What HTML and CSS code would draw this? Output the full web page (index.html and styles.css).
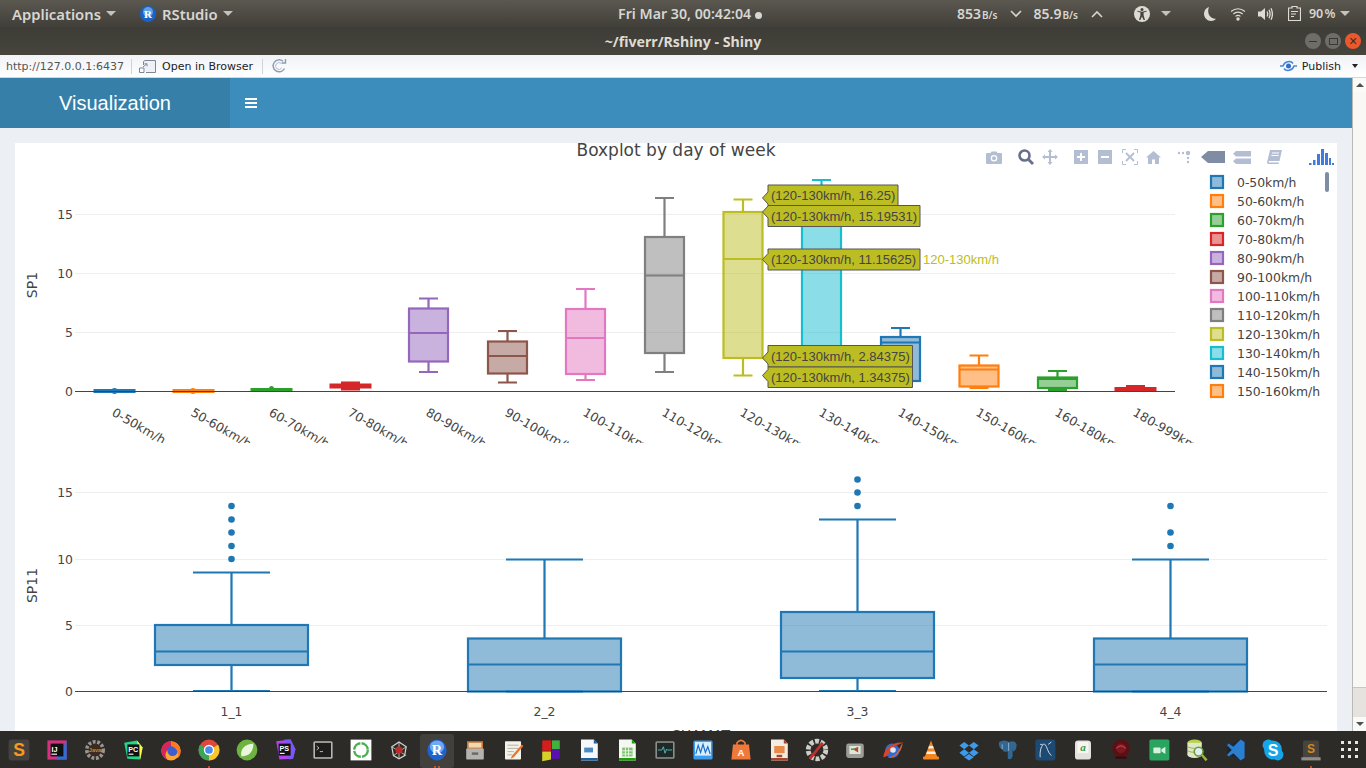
FILE: index.html
```html
<!DOCTYPE html>
<html lang="en">
<head>
    <meta charset="UTF-8">
    <meta name="viewport" content="width=device-width, initial-scale=1.0">
    <title>Visualization</title>
    <link rel="stylesheet" href="styles.css">
</head>
<body>
<div class="screen">

    <!-- desktop top bar -->
    <div class="topbar">
        <div class="top-left">
            <span class="top-item apps">Applications</span><span class="caret"></span>
            <svg class="r-logo" width="16" height="16" viewBox="0 0 16 16"><circle cx="8" cy="8" r="8" fill="#1a62c4"/><circle cx="8" cy="6" r="5" fill="#5f9fe8"/><text x="8" y="12" class="r-letter">R</text></svg>
            <span class="top-item rstudio">RStudio</span><span class="caret"></span>
        </div>
        <div class="top-date">Fri Mar 30, 00:42:04 <span class="date-dot"></span></div>
        <div class="top-right">
            <span class="top-item">853<small>B/s</small></span>
            <svg class="chev chev-down" width="12" height="8" viewBox="0 0 12 8"><path d="M1 1l5 5 5-5" fill="none" stroke="#d8d5cf" stroke-width="1.6"/></svg>
            <span class="top-item net-up">85.9<small>B/s</small></span>
            <svg class="chev chev-up" width="12" height="8" viewBox="0 0 12 8"><path d="M1 7l5-5 5 5" fill="none" stroke="#d8d5cf" stroke-width="1.6"/></svg>
            <svg class="ic-access" width="16" height="16" viewBox="0 0 16 16"><circle cx="8" cy="8" r="8" fill="#dedbd5"/><circle cx="8" cy="3.6" r="1.5" fill="#45433d"/><path d="M3.2 5.6L6.4 6.6V9.2L5 14H6.4L8 10.4 9.6 14H11L9.6 9.2V6.6L12.8 5.6 12.5 4.8 8 5.8 3.5 4.8z" fill="#45433d"/></svg>
            <span class="caret caret-access"></span>
            <svg class="ic-moon" width="12" height="14" viewBox="0 0 12 14"><path d="M5 0C2 1 0 3.600 0 6.800 0 10.800 3.200 14 7 14 9 14 10.800 13.200 12 11.800 8 12 5 9 4.400 6 4 4 4.200 2 5 0z" fill="#dedbd5"/></svg>
            <svg class="ic-wifi" width="14" height="14" viewBox="0 0 14 14"><path d="M0 4.500C4 .8 10 .8 14 4.500M2.300 7C5 4.600 9 4.600 11.700 7M4.500 9.400C6 8.200 8 8.200 9.500 9.400" fill="none" stroke="#dedbd5" stroke-width="1.200"/><circle cx="7" cy="12" r="1.700" fill="#dedbd5"/></svg>
            <svg class="ic-vol" width="15" height="14" viewBox="0 0 15 14"><path d="M0 4.500H3L7 1V13L3 9.500H0z" fill="#dedbd5"/><path d="M9 4.500Q10.500 7 9 9.500M11 2.800Q13.200 7 11 11.200M13 1.200Q15.800 7 13 12.800" fill="none" stroke="#dedbd5" stroke-width="1.300"/></svg>
            <svg class="ic-batt" width="13" height="15" viewBox="0 0 13 15"><path d="M4 .5H9V2H12.500V14.500H.5V2H4z" fill="none" stroke="#dedbd5" stroke-width="1.200"/><path d="M3 5.500H10M3 8H8M3 10.500H6" stroke="#dedbd5" stroke-width="1.100"/></svg>
            <span class="top-item pct">90 %</span><span class="caret"></span>
        </div>
    </div>

    <!-- window title bar -->
    <div class="titlebar">
        <span class="win-title">~/fiverr/Rshiny - Shiny</span>
        <div class="win-buttons">
            <span class="win-btn"><span class="win-min"></span></span>
            <span class="win-btn"><span class="win-max"></span></span>
            <span class="win-btn win-close">&#215;</span>
        </div>
    </div>

    <!-- rstudio viewer toolbar -->
    <div class="toolbar">
        <span class="url">http://127.0.0.1:6437</span>
        <span class="tool-sep"></span>
        <svg class="ic-open" width="18" height="13" viewBox="0 0 18 13"><path d="M4.500 5V1.500L6 .5H16.500V12.500H7" fill="#eef1f6" stroke="#7d8798"/><path d="M.5 12.500V8H5V12.500zM4 7L7.500 4M5.500 3.800H8V6.300" fill="none" stroke="#7d8798"/></svg>
        <span class="open-text">Open in Browser</span>
        <span class="tool-sep sep-two"></span>
        <svg class="ic-refresh" width="16" height="16" viewBox="0 0 16 16"><path d="M13.500 10.500A6 6 0 1 1 12 3.200M14.500 1V5H10.500" fill="none" stroke="#8f9bb2" stroke-width="1.400"/><path d="M10.800 10A3.400 3.400 0 1 1 10.200 5.400" fill="none" stroke="#b4bccb"/></svg>
        <svg class="ic-publish" width="17" height="12" viewBox="0 0 17 12"><circle cx="8.500" cy="6" r="2.500" fill="#2f6fd0"/><path d="M0 6H3C4.500 1 11 .5 13 3.500M17 6H14C12.500 11 6 11.500 4 8.500" fill="none" stroke="#4a86d8" stroke-width="1.500"/></svg>
        <span class="publish-text">Publish</span>
        <span class="publish-caret"></span>
    </div>

    <div class="viewer">
        <div class="page">
            <header class="app-header">
                <div class="logo">Visualization</div>
                <div class="hamburger"><span></span><span></span><span></span></div>
            </header>

            <div class="content">
                <div class="card">
                    <div class="plot">
                        <div class="modebar">
                            <svg class="mb mb-camera" width="16" height="13" viewBox="0 0 16 13"><path fill-rule="evenodd" d="M1 2H4.500L5.500 .5H10.500L11.500 2H15Q16 2 16 3V12Q16 13 15 13H1Q0 13 0 12V3Q0 2 1 2zM8 4A3.300 3.300 0 1 0 8 10.600 3.300 3.300 0 1 0 8 4z"/><circle cx="8" cy="7.300" r="2"/></svg>
                            <svg class="mb mb-zoom" width="16" height="16" viewBox="0 0 16 16"><circle cx="6.500" cy="6.500" r="5" fill="none" stroke-width="2.600"/><path d="M10.500 10.500L15 15" fill="none" stroke-width="2.800"/></svg>
                            <svg class="mb mb-pan" width="16" height="16" viewBox="0 0 16 16"><path d="M8 0L10.500 3H9V7H13V5.500L16 8 13 10.500V9H9V13H10.500L8 16 5.500 13H7V9H3V10.500L0 8 3 5.500V7H7V3H5.500z"/></svg>
                            <svg class="mb mb-plus" width="14" height="14" viewBox="0 0 14 14"><path fill-rule="evenodd" d="M0 0H14V14H0zM6 3V6H3V8H6V11H8V8H11V6H8V3z"/></svg>
                            <svg class="mb mb-minus" width="14" height="14" viewBox="0 0 14 14"><path fill-rule="evenodd" d="M0 0H14V14H0zM3 6V8H11V6z"/></svg>
                            <svg class="mb mb-auto" width="16" height="16" viewBox="0 0 16 16"><path d="M.5 4V.5H4M12 .5H15.500V4M15.500 12V15.500H12M4 15.500H.5V12" fill="none" stroke-width="1"/><path d="M4 4L12 12M12 4L4 12" fill="none" stroke-width="1.800"/></svg>
                            <svg class="mb mb-home" width="15" height="13" viewBox="0 0 15 13"><path d="M7.500 0L15 6.500H13V13H9V8.500H6V13H2V6.500H0z"/></svg>
                            <svg class="mb mb-spike" width="15" height="13" viewBox="0 0 15 13"><circle cx="2" cy="2" r="1.200"/><circle cx="6" cy="2" r="1.200"/><circle cx="11" cy="2" r="2.200"/><circle cx="11" cy="7" r="1.200"/><circle cx="11" cy="11" r="1.200"/></svg>
                            <svg class="mb mb-closest" width="24" height="12" viewBox="0 0 24 12"><path d="M0 6L7 0H24V12H7z"/></svg>
                            <svg class="mb mb-compare" width="18" height="13" viewBox="0 0 18 13"><path d="M3 0H18V5.500H3L0 2.700zM3 7.500H18V13H3L0 10.200z"/></svg>
                            <svg class="mb mb-book" width="15" height="14" viewBox="0 0 15 14"><path fill-rule="evenodd" d="M3 0H15L12.500 11H2.500Q1.500 11 1.800 12.500H12L11.700 14H2Q0 14 0 12.500zM5 2.500L4.800 3.500H12L12.200 2.500zM4.500 5L4.300 6H11.500L11.700 5z"/></svg>
                            <svg class="mb mb-logo" width="25" height="16" viewBox="0 0 25 16"><path d="M0 14h2.500v2H0zM4 11h2.500v5H4zM8 5h3v11H8zM12 0h3v16h-3zM16 4h3v12h-3zM20 9h2v7h-2zM23 14h2v2h-2z"/></svg>
                        </div>
                        <svg class="chart" width="1322" height="300" viewBox="15 143 1322 300">
                            <text x="676" y="155.500" class="plot-title">Boxplot by day of week</text>

                            <g class="grid">
                                <path d="M75 214.500H1175M75 273.500H1175M75 332.500H1175"/>
                            </g>
                            <g class="ylabels">
                                <text x="73" y="219">15</text>
                                <text x="73" y="278">10</text>
                                <text x="73" y="337">5</text>
                                <text x="73" y="396">0</text>
                            </g>
                            <text class="ytitle" transform="translate(37 285) rotate(-90)" x="0" y="0">SP1</text>

                            <g class="box box-flat c-blue"><rect x="95" y="390.500" width="39" height="1"/><circle cx="114.500" cy="391" r="3" class="pt"/></g>
                            <g class="box box-flat c-orange"><rect x="174" y="390.500" width="39" height="1"/><circle cx="193" cy="391" r="3" class="pt"/></g>
                            <g class="box box-flat c-green"><rect x="252" y="389.500" width="39" height="1"/><circle cx="271.500" cy="388.500" r="2.500" class="pt"/></g>
                            <g class="box box-flat c-red"><rect x="331" y="385" width="39" height="2"/><path d="M341 383H360M341 389H360"/></g>
                            <g class="box c-purple"><rect x="409" y="308.500" width="39" height="53"/><path d="M409 333H448M428.500 308.500V298.500M419 298.500H438M428.500 361.500V372M419 372H438"/></g>
                            <g class="box c-brown"><rect x="488" y="341.500" width="39" height="32"/><path d="M488 356H527M507.500 341.500V331M498 331H517M507.500 373.500V382.500M498 382.500H517"/></g>
                            <g class="box c-pink"><rect x="566" y="309" width="39" height="65"/><path d="M566 338H605M585.500 309V289M576 289H595M585.500 374V380M576 380H595"/></g>
                            <g class="box c-gray"><rect x="645" y="237" width="39" height="116"/><path d="M645 275.500H684M664.500 237V198M655 198H674M664.500 353V372M655 372H674"/></g>
                            <g class="box c-olive"><rect x="723.500" y="212" width="39" height="146"/><path d="M723.500 259H762.500M743 212V199.500M733.500 199.500H752.500M743 358V375.500M733.500 375.500H752.500"/></g>
                            <g class="box c-cyan"><rect x="802" y="192" width="39" height="180"/><path d="M821.500 192V180M812 180H831"/></g>
                            <g class="box c-blue"><rect x="881" y="337" width="39" height="44"/><path d="M881 342.500H920M900.500 337V328M891 328H910"/></g>
                            <g class="box c-orange"><rect x="959.500" y="365.500" width="39" height="21"/><path d="M959.500 369.500H998.500M979 365.500V355.500M969.500 355.500H988.500M969.500 388H988.500"/></g>
                            <g class="box c-green"><rect x="1038" y="377.500" width="39" height="10.500"/><path d="M1038 379H1077M1057.500 377.500V371M1048 371H1067M1048 390H1067"/></g>
                            <g class="box box-flat c-red"><rect x="1116" y="388.500" width="39" height="2"/><path d="M1126 386.500H1145"/></g>

                            <path class="axis" d="M75 391.500H1175"/>

                            <g class="xlabels">
                                <text transform="translate(111 415) rotate(30)">0-50km/h</text>
                                <text transform="translate(190 415) rotate(30)">50-60km/h</text>
                                <text transform="translate(268 415) rotate(30)">60-70km/h</text>
                                <text transform="translate(347 415) rotate(30)">70-80km/h</text>
                                <text transform="translate(425 415) rotate(30)">80-90km/h</text>
                                <text transform="translate(504 415) rotate(30)">90-100km/h</text>
                                <text transform="translate(582 415) rotate(30)">100-110km/h</text>
                                <text transform="translate(661 415) rotate(30)">110-120km/h</text>
                                <text transform="translate(739 415) rotate(30)">120-130km/h</text>
                                <text transform="translate(818 415) rotate(30)">130-140km/h</text>
                                <text transform="translate(897 415) rotate(30)">140-150km/h</text>
                                <text transform="translate(975 415) rotate(30)">150-160km/h</text>
                                <text transform="translate(1054 415) rotate(30)">160-180km/h</text>
                                <text transform="translate(1132 415) rotate(30)">180-999km/h</text>
                            </g>

                            <g class="legend">
                                <g class="box c-blue"><rect x="1211" y="176" width="12" height="12"/></g><text x="1237" y="187">0-50km/h</text>
                                <g class="box c-orange"><rect x="1211" y="195" width="12" height="12"/></g><text x="1237" y="206">50-60km/h</text>
                                <g class="box c-green"><rect x="1211" y="214" width="12" height="12"/></g><text x="1237" y="225">60-70km/h</text>
                                <g class="box c-red"><rect x="1211" y="233" width="12" height="12"/></g><text x="1237" y="244">70-80km/h</text>
                                <g class="box c-purple"><rect x="1211" y="252" width="12" height="12"/></g><text x="1237" y="263">80-90km/h</text>
                                <g class="box c-brown"><rect x="1211" y="271" width="12" height="12"/></g><text x="1237" y="282">90-100km/h</text>
                                <g class="box c-pink"><rect x="1211" y="290" width="12" height="12"/></g><text x="1237" y="301">100-110km/h</text>
                                <g class="box c-gray"><rect x="1211" y="309" width="12" height="12"/></g><text x="1237" y="320">110-120km/h</text>
                                <g class="box c-olive"><rect x="1211" y="328" width="12" height="12"/></g><text x="1237" y="339">120-130km/h</text>
                                <g class="box c-cyan"><rect x="1211" y="347" width="12" height="12"/></g><text x="1237" y="358">130-140km/h</text>
                                <g class="box c-blue"><rect x="1211" y="366" width="12" height="12"/></g><text x="1237" y="377">140-150km/h</text>
                                <g class="box c-orange"><rect x="1211" y="385" width="12" height="12"/></g><text x="1237" y="396">150-160km/h</text>
                                <rect class="legend-thumb" x="1325" y="172" width="4" height="20" rx="2"/>
                            </g>

                            <g class="hover">
                                <path d="M762.500 198L768 192V185H898V205.500H768V204z"/><text x="771" y="200">(120-130km/h, 16.25)</text>
                                <path d="M762.500 212L768 206V205.500H920V226.500H768V218z"/><text x="771" y="221">(120-130km/h, 15.19531)</text>
                                <path d="M762.500 259.500L768 253.500V249H920V270H768V265.500z"/><text x="771" y="264">(120-130km/h, 11.15625)</text>
                                <path d="M762.500 358L768 352V345.500H912.500V367H768V364z"/><text x="771" y="361">(120-130km/h, 2.84375)</text>
                                <path d="M762.500 375.500L768 369.500V367H912.500V387.500H768V381.500z"/><text x="771" y="382">(120-130km/h, 1.34375)</text>
                                <text x="923" y="264" class="hover-name">120-130km/h</text>
                            </g>
                        </svg>
                    </div>

                    <div class="plot">
                        <svg class="chart" width="1322" height="300" viewBox="15 443 1322 300">
                            <g class="grid">
                                <path d="M75 492.500H1327M75 559.500H1327M75 625.500H1327"/>
                            </g>
                            <g class="ylabels">
                                <text x="73" y="497">15</text>
                                <text x="73" y="564">10</text>
                                <text x="73" y="630">5</text>
                                <text x="73" y="696">0</text>
                            </g>
                            <text class="ytitle" transform="translate(37 585.500) rotate(-90)" x="0" y="0">SP11</text>

                            <g class="box c-blue">
                                <rect x="155" y="625" width="153" height="40"/>
                                <path d="M155 651.500H308M231.500 625V572.500M193 572.500H270M231.500 665V691M193 691H270"/>
                                <circle class="pt" cx="231.500" cy="506" r="3.300"/><circle class="pt" cx="231.500" cy="519.500" r="3.300"/><circle class="pt" cx="231.500" cy="532.500" r="3.300"/><circle class="pt" cx="231.500" cy="546" r="3.300"/><circle class="pt" cx="231.500" cy="559" r="3.300"/>
                            </g>
                            <g class="box c-blue">
                                <rect x="468" y="638.500" width="153" height="53"/>
                                <path d="M468 664.500H621M544.500 638.500V559.500M506 559.500H583M506 691.500H583"/>
                            </g>
                            <g class="box c-blue">
                                <rect x="781" y="612" width="153" height="66"/>
                                <path d="M781 651.500H934M857.500 612V519.500M819 519.500H896M857.500 678V691M819 691H896"/>
                                <circle class="pt" cx="857.500" cy="479.500" r="3.300"/><circle class="pt" cx="857.500" cy="492.500" r="3.300"/><circle class="pt" cx="857.500" cy="506" r="3.300"/>
                            </g>
                            <g class="box c-blue">
                                <rect x="1094" y="638.500" width="153" height="53"/>
                                <path d="M1094 664.500H1247M1170.500 638.500V559.500M1132 559.500H1209M1132 691.500H1209"/>
                                <circle class="pt" cx="1170.500" cy="506" r="3.300"/><circle class="pt" cx="1170.500" cy="532.500" r="3.300"/><circle class="pt" cx="1170.500" cy="546" r="3.300"/>
                            </g>

                            <path class="axis" d="M75 691.500H1327"/>

                            <g class="xlabels xlabels-center">
                                <text x="231.500" y="716">1_1</text>
                                <text x="544.500" y="716">2_2</text>
                                <text x="857.500" y="716">3_3</text>
                                <text x="1170.500" y="716">4_4</text>
                            </g>
                            <text x="701" y="740" class="xtitle">SHAMAT</text>
                        </svg>
                    </div>
                </div>
            </div>
        </div>

        <div class="scrollbar">
            <div class="scroll-btn"><span class="arrow-up"></span></div>
            <div class="scroll-thumb"></div>
            <div class="scroll-track"></div>
            <div class="scroll-btn"><span class="arrow-down"></span></div>
        </div>
    </div>

    <!-- launcher -->
    <div class="dock">
        <div class="dock-item"><svg width="30" height="30" viewBox="0 0 30 30"><rect x="2" y="2" width="26" height="26" rx="3" fill="#45423e"/><text x="15" y="23" class="dock-s" fill="#f59a1b">S</text></svg></div>
        <div class="dock-item"><svg width="30" height="30" viewBox="0 0 30 30"><rect x="3" y="3" width="24" height="24" fill="#d4317f"/><path d="M27 3V27H14z" fill="#2d6fd8"/><rect x="7" y="7" width="16" height="16" fill="#111"/><text x="8" y="17" class="dock-txt">IJ</text><rect x="8" y="19.500" width="7" height="1.500" fill="#eee"/></svg></div>
        <div class="dock-item"><svg width="30" height="30" viewBox="0 0 30 30"><circle cx="15" cy="15" r="10" fill="none" stroke="#9a9590" stroke-width="5" stroke-dasharray="3.500 2"/><circle cx="15" cy="15" r="8" fill="#3a2a20"/><text x="15" y="18" class="dock-tiny" fill="#c08a40">Java</text></svg></div>
        <div class="dock-item"><svg width="30" height="30" viewBox="0 0 30 30"><path d="M4 6L20 3 27 12 24 27 8 26z" fill="#21d789"/><path d="M20 3L27 12 24 27z" fill="#fcf84a"/><rect x="8" y="8" width="15" height="15" fill="#111"/><text x="9" y="17.500" class="dock-txt">PC</text><rect x="9.500" y="19.500" width="6" height="1.500" fill="#eee"/></svg></div>
        <div class="dock-item"><svg width="30" height="30" viewBox="0 0 30 30"><circle cx="15" cy="16" r="12" fill="#ffa436"/><path d="M15 4A12 12 0 0 0 6 24 12 12 0 0 0 10 27C6 20 9 14 15 14z" fill="#d2285a"/><circle cx="17" cy="16" r="6.500" fill="#3c5fd0"/><path d="M15 4C22 5 27 10 27 17 27 20 26 23 24 25 25 18 22 12 15 10z" fill="#ff7a1f"/></svg></div>
        <div class="dock-item"><svg width="30" height="30" viewBox="0 0 30 30"><circle cx="15" cy="15" r="13" fill="#e0463a"/><path d="M15 15L26.300 8.500A13 13 0 0 1 15 28z" fill="#f7c52d"/><path d="M15 15L15 28A13 13 0 0 1 3.700 8.500z" fill="#3aa757"/><circle cx="15" cy="15" r="6.500" fill="#fff"/><circle cx="15" cy="15" r="4.800" fill="#4a8bf0"/></svg><span class="dock-dots"><i></i></span></div>
        <div class="dock-item"><svg width="30" height="30" viewBox="0 0 30 30"><circle cx="15" cy="15" r="13" fill="#6db33f"/><path d="M8 23C6 14 12 8 23 7 23 16 19 23 8 23z" fill="#e9f5dc"/></svg></div>
        <div class="dock-item"><svg width="30" height="30" viewBox="0 0 30 30"><path d="M4 4L22 2 28 14 25 26 8 27z" fill="#b345f1"/><path d="M14 2L22 2 28 14 25 26 20 27z" fill="#765af8"/><rect x="7" y="7" width="15" height="15" fill="#111"/><text x="8" y="16.500" class="dock-txt">PS</text><rect x="8.500" y="18.500" width="6" height="1.500" fill="#eee"/></svg></div>
        <div class="dock-item"><svg width="30" height="30" viewBox="0 0 30 30"><rect x="3" y="4" width="24" height="22" rx="2" fill="#b8b6b2"/><rect x="5" y="6" width="20" height="18" fill="#201e1c"/><path d="M7 10L10 12.500 7 15M11 17H15" fill="none" stroke="#ddd"/></svg></div>
        <div class="dock-item"><svg width="30" height="30" viewBox="0 0 30 30"><rect x="2" y="2" width="26" height="26" fill="#fff"/><circle cx="15" cy="15" r="8.500" fill="none" stroke="#4cb050" stroke-width="3" stroke-dasharray="12 1.500"/></svg></div>
        <div class="dock-item"><svg width="30" height="30" viewBox="0 0 30 30"><path d="M15 5L24 11 22 22 15 26 8 22 6 11z" fill="none" stroke="#d8d4d0" stroke-width="1.500"/><path d="M6 11L24 22M24 11L8 22M15 5V26" stroke="#d8d4d0"/><circle cx="15" cy="15" r="4.500" fill="#c22a2a"/></svg></div>
        <div class="dock-item dock-active"><svg width="30" height="30" viewBox="0 0 30 30"><ellipse cx="15" cy="15" rx="12" ry="13" fill="#1e63d0"/><ellipse cx="15" cy="11" rx="9" ry="8" fill="#6fa9f0"/><text x="15" y="21" class="dock-r">R</text></svg><span class="dock-dots"><i></i><i></i></span></div>
        <div class="dock-item"><svg width="30" height="30" viewBox="0 0 30 30"><rect x="5" y="4" width="20" height="10" fill="#c9773a"/><rect x="7" y="6" width="16" height="6" fill="#f0d9ae"/><rect x="4" y="13" width="22" height="14" rx="1" fill="#b5b3af"/><rect x="11" y="18" width="8" height="3" fill="#6a6865"/></svg></div>
        <div class="dock-item"><svg width="30" height="30" viewBox="0 0 30 30"><rect x="5" y="4" width="20" height="23" rx="1" fill="#f5f2ea"/><path d="M8 9H22M8 13H22M8 17H16M8 21H14" stroke="#a5a29a"/><path d="M26 8L14 22 12 26 16 24 28 10z" fill="#e8762d"/></svg></div>
        <div class="dock-item"><svg width="30" height="30" viewBox="0 0 30 30"><rect x="4" y="3" width="11" height="13" fill="#d41d1d"/><rect x="16" y="3" width="10" height="11" fill="#3fb23f"/><path d="M4 17H15V27L4 29z" fill="#d5cf2a"/><rect x="16" y="15" width="10" height="11" fill="#5a0fb0"/></svg></div>
        <div class="dock-item"><svg width="30" height="30" viewBox="0 0 30 30"><path d="M5 2H21L26 7V28H5z" fill="#f5f7fa"/><path d="M21 2L26 7H21z" fill="#1b5f9e"/><rect x="9" y="12" width="11" height="6" fill="#4a8ac0"/><rect x="5" y="25" width="21" height="3" fill="#1b5f9e"/></svg></div>
        <div class="dock-item"><svg width="30" height="30" viewBox="0 0 30 30"><path d="M5 2H21L26 7V28H5z" fill="#f5f7f2"/><path d="M21 2L26 7H21z" fill="#18a303"/><rect x="9" y="12" width="13" height="11" fill="#7cc46c"/><path d="M13 12V23M17 12V23M9 16H22M9 20H22" stroke="#fff"/><rect x="5" y="25" width="21" height="3" fill="#18a303"/></svg></div>
        <div class="dock-item"><svg width="30" height="30" viewBox="0 0 30 30"><rect x="3" y="4" width="24" height="22" rx="2" fill="#8f8d89"/><rect x="5" y="6" width="20" height="18" fill="#1e2a2a"/><path d="M6 15H11L13 11 15 19 17 14 18 15H24" fill="none" stroke="#5fd0c0"/></svg></div>
        <div class="dock-item"><svg width="30" height="30" viewBox="0 0 30 30"><rect x="3" y="3" width="24" height="24" rx="2" fill="#3d9df0"/><rect x="5" y="5" width="20" height="17" fill="#d8efff"/><path d="M6 20L9 9 12 18 15 8 18 18 21 11 24 20" fill="none" stroke="#1a6fc8" stroke-width="1.500"/></svg></div>
        <div class="dock-item"><svg width="30" height="30" viewBox="0 0 30 30"><path d="M5 8H25L27 27H3z" fill="#f0793a"/><path d="M10 9V6Q15 0 20 6V9" fill="none" stroke="#f0793a" stroke-width="2"/><text x="15" y="23" class="dock-bag">A</text></svg></div>
        <div class="dock-item"><svg width="30" height="30" viewBox="0 0 30 30"><path d="M5 2H21L26 7V28H5z" fill="#f3ece2"/><path d="M21 2L26 7H21z" fill="#a5452a"/><rect x="9" y="10" width="13" height="9" fill="#e88a4a"/><rect x="12" y="21" width="7" height="3" fill="#a5452a"/><rect x="5" y="25" width="21" height="3" fill="#a5452a"/></svg></div>
        <div class="dock-item"><svg width="30" height="30" viewBox="0 0 30 30"><circle cx="15" cy="15" r="11" fill="none" stroke="#cfcdc8" stroke-width="6" stroke-dasharray="5 2"/><path d="M6 26L22 6" stroke="#c0302a" stroke-width="3.500"/></svg></div>
        <div class="dock-item"><svg width="30" height="30" viewBox="0 0 30 30"><rect x="4" y="7" width="22" height="18" rx="3" fill="#9e9c98"/><rect x="8" y="10" width="14" height="10" fill="#dfe8d8"/><path d="M12 14L19 11V18z" fill="#b04a3a"/><path d="M10 14H15" stroke="#4a9a4a" stroke-width="2"/></svg></div>
        <div class="dock-item"><svg width="30" height="30" viewBox="0 0 30 30"><circle cx="14" cy="16" r="9" fill="#2f6bd0"/><path d="M3 24C3 14 15 4 28 6 22 8 16 10 13 15 10 19 8 24 3 24z" fill="#d9432a"/><path d="M27 6C27 16 18 26 8 25 15 23 20 20 22 15z" fill="#e8602a"/><circle cx="15" cy="15" r="3.500" fill="#dfe8f5"/></svg></div>
        <div class="dock-item"><svg width="30" height="30" viewBox="0 0 30 30"><path d="M15 3L23 24H7z" fill="#f5861f"/><path d="M12.500 10H17.500L18.500 13H11.500zM10 17H20L21 20H9z" fill="#f4f1ea"/><rect x="5" y="23" width="20" height="4" rx="1" fill="#f5861f"/></svg></div>
        <div class="dock-item"><svg width="30" height="30" viewBox="0 0 30 30"><path d="M9 5L15 9.500 9 14 3 9.500zM21 5L27 9.500 21 14 15 9.500zM9 14L15 18.500 9 23 3 18.500zM21 14L27 18.500 21 23 15 18.500z" fill="#3d9ae8"/><path d="M9 24L15 20 21 24 15 28z" fill="#3d9ae8"/></svg></div>
        <div class="dock-item"><svg width="30" height="30" viewBox="0 0 30 30"><path d="M5 5Q13 1 17 5 25 2 27 8 27 15 23 17L22 14V23Q20 28 16 26V17Q10 18 9 14 4 12 5 5z" fill="#336791"/><path d="M9 8V14M17 6V16" stroke="#9fc0da"/></svg></div>
        <div class="dock-item"><svg width="30" height="30" viewBox="0 0 30 30"><rect x="3" y="2" width="25" height="26" rx="3" fill="#1c4a72"/><path d="M9 24C8 14 12 6 15 8 18 11 18 18 23 22M19 8L23 5M9 8H12" fill="none" stroke="#d5dde5" stroke-width="1.200"/></svg></div>
        <div class="dock-item"><svg width="30" height="30" viewBox="0 0 30 30"><rect x="5" y="3" width="20" height="24" rx="4" fill="#e4e2dc"/><rect x="8" y="5" width="14" height="14" fill="#f6f5f0"/><text x="15" y="16" class="dock-a">a</text></svg></div>
        <div class="dock-item"><svg width="30" height="30" viewBox="0 0 30 30"><circle cx="15" cy="13" r="11" fill="#5a1014"/><circle cx="15" cy="13" r="6" fill="#7a1a20"/><path d="M9 13Q15 7 21 13" fill="none" stroke="#c0404a" stroke-width="1.500"/><rect x="8" y="23" width="14" height="3" fill="#3a0a0e"/></svg></div>
        <div class="dock-item"><svg width="30" height="30" viewBox="0 0 30 30"><rect x="3" y="2" width="25" height="26" rx="2" fill="#2aa55f"/><rect x="8" y="12" width="9" height="7" rx="1" fill="#d9f0e0"/><path d="M18 14L23 11V20L18 17z" fill="#d9f0e0"/></svg></div>
        <div class="dock-item"><svg width="30" height="30" viewBox="0 0 30 30"><ellipse cx="12" cy="6" rx="9" ry="4" fill="#b6d24a"/><rect x="3" y="6" width="18" height="15" fill="#e0e8c8"/><ellipse cx="12" cy="21" rx="9" ry="4" fill="#e0e8c8"/><path d="M3 11Q12 15 21 11M3 16Q12 20 21 16" fill="none" stroke="#8ba83a"/><circle cx="17" cy="17" r="5.500" fill="#dfeef5" stroke="#6a9a3a" stroke-width="2"/><path d="M21 21L27 28" stroke="#9ab83a" stroke-width="3"/></svg></div>
        <div class="dock-item"><svg width="30" height="30" viewBox="0 0 30 30"><path d="M5 11L10 8 22 2 27 5V25L22 28 5 19z" fill="#1b2733"/><path d="M22 2L27 5V25L22 28 13 19 7 23 5 21 11 15 5 9 7 7 13 11z" fill="#2b7fd0"/></svg></div>
        <div class="dock-item"><svg width="30" height="30" viewBox="0 0 30 30"><circle cx="9" cy="9" r="7" fill="#15a5e8"/><circle cx="21" cy="21" r="7" fill="#15a5e8"/><rect x="4" y="3" width="22" height="24" rx="11" fill="#15a5e8"/><text x="15" y="23" class="dock-skype">S</text></svg></div>
        <div class="dock-item"><svg width="30" height="30" viewBox="0 0 30 30"><rect x="5" y="3" width="20" height="22" rx="2" fill="#47443f"/><rect x="3" y="24" width="24" height="4" fill="#8f8c87"/><text x="15" y="19" class="dock-sub" fill="#d8851a">S</text></svg><span class="dock-dots"><i></i></span></div>
        <div class="dock-item"><span class="apps-grid"><i></i><i></i><i></i><i></i><i></i><i></i><i></i><i></i><i></i></span></div>
    </div>
</div>
</body>
</html>
```

FILE: styles.css
```css
body {
    margin: 0;
    font-family: "Liberation Sans", Arial, sans-serif;
    color: #444;
}

.screen {
    width: 1366px;
    height: 768px;
    display: flex;
    flex-direction: column;
    overflow: hidden;
}

/* desktop top bar */
.topbar {
    height: 27px;
    flex: none;
    display: flex;
    align-items: center;
    background: linear-gradient(#5b5850, #413f39);
    color: #d6d6d2;
    font-family: "Noto Sans", sans-serif;
    font-size: 14.8px;
    font-weight: 600;
}

.top-left {
    flex: 0 0 618px;
    display: flex;
    align-items: center;
    padding-left: 12px;
    box-sizing: border-box;
}

.r-logo {
    margin-left: 24px;
    margin-right: 6px;
}

.r-letter {
    font-family: "Liberation Serif", serif;
    font-size: 11px;
    font-weight: 700;
    fill: #fff;
    text-anchor: middle;
}

.caret {
    width: 0;
    height: 0;
    margin-left: 5px;
    border-left: 5px solid transparent;
    border-right: 5px solid transparent;
    border-top: 5px solid #c4c2bc;
}

.top-date {
    flex: 0 0 144px;
    white-space: nowrap;
    font-size: 14.2px;
}

.date-dot {
    display: inline-block;
    width: 7px;
    height: 7px;
    border-radius: 50%;
    background: #d6d6d2;
}

.top-right {
    flex: 1;
    display: flex;
    align-items: center;
    padding-left: 195px;
    white-space: nowrap;
    font-size: 14px;
}

.top-right small {
    font-size: 10px;
    margin-left: 1px;
}

.chev-down { margin-left: 12px; }
.net-up { margin-left: 12px; }
.chev-up { margin-left: 13px; }
.ic-access { margin-left: 31px; }
.caret-access { margin-left: 11px; }
.ic-moon { margin-left: 33px; }
.ic-wifi { margin-left: 15px; }
.ic-vol { margin-left: 13px; }
.ic-batt { margin-left: 15px; }
.pct { margin-left: 8px; font-size: 12.5px; word-spacing: -2px; }

/* window title bar */
.titlebar {
    height: 28px;
    flex: none;
    position: relative;
    display: flex;
    align-items: center;
    justify-content: center;
    background: linear-gradient(#3e3c36, #46443d);
}

.win-title {
    color: #dfdbd2;
    font-family: "Noto Sans", sans-serif;
    font-size: 14.2px;
    font-weight: 700;
}

.win-buttons {
    position: absolute;
    right: 5px;
    top: 6px;
    display: flex;
    gap: 4px;
}

.win-btn {
    width: 16px;
    height: 16px;
    border-radius: 50%;
    background: #6f6d67;
    display: flex;
    align-items: center;
    justify-content: center;
    color: #3b2a22;
    font-size: 14px;
    line-height: 16px;
}

.win-min {
    width: 8px;
    height: 1px;
    background: #3a3833;
}

.win-max {
    width: 7px;
    height: 5px;
    border: 1px solid #3a3833;
}

.win-close {
    background: #e9592b;
}

/* viewer toolbar */
.toolbar {
    height: 23px;
    flex: none;
    box-sizing: border-box;
    display: flex;
    align-items: center;
    padding-left: 6px;
    background: linear-gradient(#f0f2f6, #fff);
    border-bottom: 1px solid #d3d6db;
    font-family: "DejaVu Sans", sans-serif;
    font-size: 11px;
    color: #222;
}

.url {
    color: #555;
    width: 119px;
    white-space: nowrap;
}

.tool-sep {
    width: 1px;
    height: 15px;
    margin-left: 6px;
    background: #cfd3da;
}

.ic-open { margin-left: 7px; }
.open-text { margin-left: 5px; white-space: nowrap; }
.sep-two { margin-left: 9px; }
.ic-refresh { margin-left: 8px; }
.ic-publish { margin-left: auto; }
.publish-text { margin-left: 5px; }

.publish-caret {
    width: 0;
    height: 0;
    margin: 0 8px 0 11px;
    border-left: 3.5px solid transparent;
    border-right: 3.5px solid transparent;
    border-top: 4px solid #222;
}

/* shiny app */
.viewer {
    flex: 1;
    display: flex;
    min-height: 0;
}

.page {
    flex: 1;
    display: flex;
    flex-direction: column;
    min-width: 0;
    background: #ecf0f5;
}

.app-header {
    height: 50px;
    flex: none;
    display: flex;
    background: #3c8dbc;
}

.logo {
    width: 230px;
    background: #367fa9;
    color: #fff;
    font-size: 20px;
    line-height: 50px;
    text-align: center;
}

.hamburger {
    margin-left: 15px;
    display: flex;
    flex-direction: column;
    justify-content: center;
    gap: 2px;
}

.hamburger span {
    display: block;
    width: 12px;
    height: 2px;
    background: #fff;
}

.content {
    flex: 1;
    min-height: 0;
    padding: 15px 15px 0;
}

.card {
    height: 100%;
    background: #fff;
    overflow: hidden;
}

.plot {
    position: relative;
    height: 300px;
}

.chart {
    display: block;
}

/* plot parts */
.plot-title {
    font-family: "DejaVu Sans", sans-serif;
    font-size: 17px;
    fill: #444;
    text-anchor: middle;
}

.grid path {
    fill: none;
    stroke: #eee;
    stroke-width: 1;
}

.axis {
    fill: none;
    stroke: #444;
    stroke-width: 1;
}

.ylabels text {
    font-family: "DejaVu Sans", sans-serif;
    font-size: 12.4px;
    fill: #444;
    text-anchor: end;
}

.ytitle {
    font-family: "DejaVu Sans", sans-serif;
    font-size: 14px;
    fill: #444;
    text-anchor: middle;
}

.xtitle {
    font-family: "DejaVu Sans", sans-serif;
    font-size: 14px;
    fill: #444;
    text-anchor: middle;
}

.xlabels text {
    font-family: "DejaVu Sans", sans-serif;
    font-size: 12.4px;
    fill: #444;
}

.xlabels-center text {
    text-anchor: middle;
}

.legend text {
    font-family: "DejaVu Sans", sans-serif;
    font-size: 12.4px;
    fill: #444;
}

.legend-thumb {
    fill: #808ba4;
}

.box {
    stroke-width: 2.2;
}

.box-flat {
    stroke-width: 3;
}

.box path {
    fill: none;
}

.box .pt {
    stroke: none;
}

.c-blue { stroke: #1f77b4; }
.c-blue rect { fill: rgba(31, 119, 180, 0.5); }
.c-blue .pt { fill: #1f77b4; }
.c-orange { stroke: #ff7f0e; }
.c-orange rect { fill: rgba(255, 127, 14, 0.5); }
.c-orange .pt { fill: #ff7f0e; }
.c-green { stroke: #2ca02c; }
.c-green rect { fill: rgba(44, 160, 44, 0.5); }
.c-green .pt { fill: #2ca02c; }
.c-red { stroke: #d62728; }
.c-red rect { fill: rgba(214, 39, 40, 0.5); }
.c-purple { stroke: #9467bd; }
.c-purple rect { fill: rgba(148, 103, 189, 0.5); }
.c-brown { stroke: #8c564b; }
.c-brown rect { fill: rgba(140, 86, 75, 0.5); }
.c-pink { stroke: #e377c2; }
.c-pink rect { fill: rgba(227, 119, 194, 0.5); }
.c-gray { stroke: #7f7f7f; }
.c-gray rect { fill: rgba(127, 127, 127, 0.5); }
.c-olive { stroke: #bcbd22; }
.c-olive rect { fill: rgba(188, 189, 34, 0.5); }
.c-cyan { stroke: #17becf; }
.c-cyan rect { fill: rgba(23, 190, 207, 0.5); }

.hover path {
    fill: #bcbd22;
    stroke: #555;
    stroke-width: 1;
}

.hover text {
    font-size: 13px;
    fill: #444;
}

.hover .hover-name {
    fill: #bcbd22;
}

/* plotly modebar sits over the plot */
.modebar {
    position: absolute;
    top: 6px;
    left: 971px;
    display: flex;
    align-items: center;
    height: 16px;
}

.mb {
    flex: none;
    fill: #b4bed2;
    stroke: none;
}

.mb-auto path,
.mb-zoom path,
.mb-zoom circle {
    stroke: #b4bed2;
}

.mb-zoom { margin-left: 16px; }
.mb-zoom circle,
.mb-zoom path { stroke: #66708a; }
.mb-pan { margin-left: 8px; }
.mb-plus { margin-left: 16px; }
.mb-minus { margin-left: 10px; }
.mb-auto { margin-left: 10px; }
.mb-home { margin-left: 8px; }
.mb-spike { margin-left: 16px; }
.mb-closest { margin-left: 9px; fill: #808ba4; }
.mb-compare { margin-left: 8px; }
.mb-book { margin-left: 16px; }
.mb-logo { margin-left: 27px; fill: #447adb; }

/* page scrollbar */
.scrollbar {
    width: 13px;
    flex: none;
    display: flex;
    flex-direction: column;
    border-left: 1px solid #b9b9b6;
    background: #e6e3df;
}

.scroll-btn {
    height: 14px;
    flex: none;
    display: flex;
    align-items: center;
    justify-content: center;
    background: #fafaf8;
}

.arrow-up,
.arrow-down {
    width: 0;
    height: 0;
    border-left: 4px solid transparent;
    border-right: 4px solid transparent;
}

.arrow-up { border-bottom: 4px solid #505050; }
.arrow-down { border-top: 4px solid #505050; }

.scroll-thumb {
    height: 596px;
    flex: none;
    box-sizing: border-box;
    background: #f9f8f5;
    border-bottom: 1px solid #c8c6c2;
}

.scroll-track {
    flex: 1;
}

/* launcher */
.dock {
    height: 37px;
    flex: none;
    display: flex;
    background: #2d2b28;
}

.dock-item {
    position: relative;
    width: 38px;
    flex: none;
    display: flex;
    align-items: center;
    justify-content: center;
}

.dock-active::before {
    content: "";
    position: absolute;
    left: 2px;
    right: 2px;
    top: 3px;
    bottom: 0;
    border-radius: 3px;
    background: rgba(255, 255, 255, 0.1);
}

.dock-item svg {
    position: relative;
    width: 24px;
    height: 24px;
}

.dock-dots {
    position: absolute;
    bottom: 0;
    left: 0;
    right: 0;
    display: flex;
    justify-content: center;
    gap: 2px;
}

.dock-dots i {
    width: 2px;
    height: 2px;
    border-radius: 50%;
    background: #e9592b;
}

.dock-txt {
    font-family: "Liberation Sans", sans-serif;
    font-size: 9px;
    font-weight: 700;
    fill: #fff;
}

.dock-s,
.dock-sub {
    font-family: "Liberation Sans", sans-serif;
    font-size: 22px;
    font-weight: 700;
    text-anchor: middle;
}

.dock-sub {
    font-size: 15px;
}

.dock-tiny {
    font-family: "Liberation Sans", sans-serif;
    font-size: 7px;
    font-weight: 700;
    text-anchor: middle;
}

.dock-r {
    font-family: "Liberation Serif", serif;
    font-size: 18px;
    font-weight: 700;
    fill: #fff;
    text-anchor: middle;
}

.dock-bag {
    font-family: "Liberation Sans", sans-serif;
    font-size: 12px;
    font-weight: 700;
    fill: #fff;
    text-anchor: middle;
}

.dock-a {
    font-family: "Liberation Serif", serif;
    font-size: 14px;
    font-weight: 700;
    font-style: italic;
    fill: #3f9a3f;
    text-anchor: middle;
}

.dock-skype {
    font-family: "Liberation Sans", sans-serif;
    font-size: 20px;
    font-weight: 700;
    fill: #fff;
    text-anchor: middle;
}

.apps-grid {
    display: grid;
    grid-template-columns: repeat(3, 3px);
    gap: 4px;
}

.apps-grid i {
    width: 3px;
    height: 3px;
    background: #e8e6e2;
}
```
